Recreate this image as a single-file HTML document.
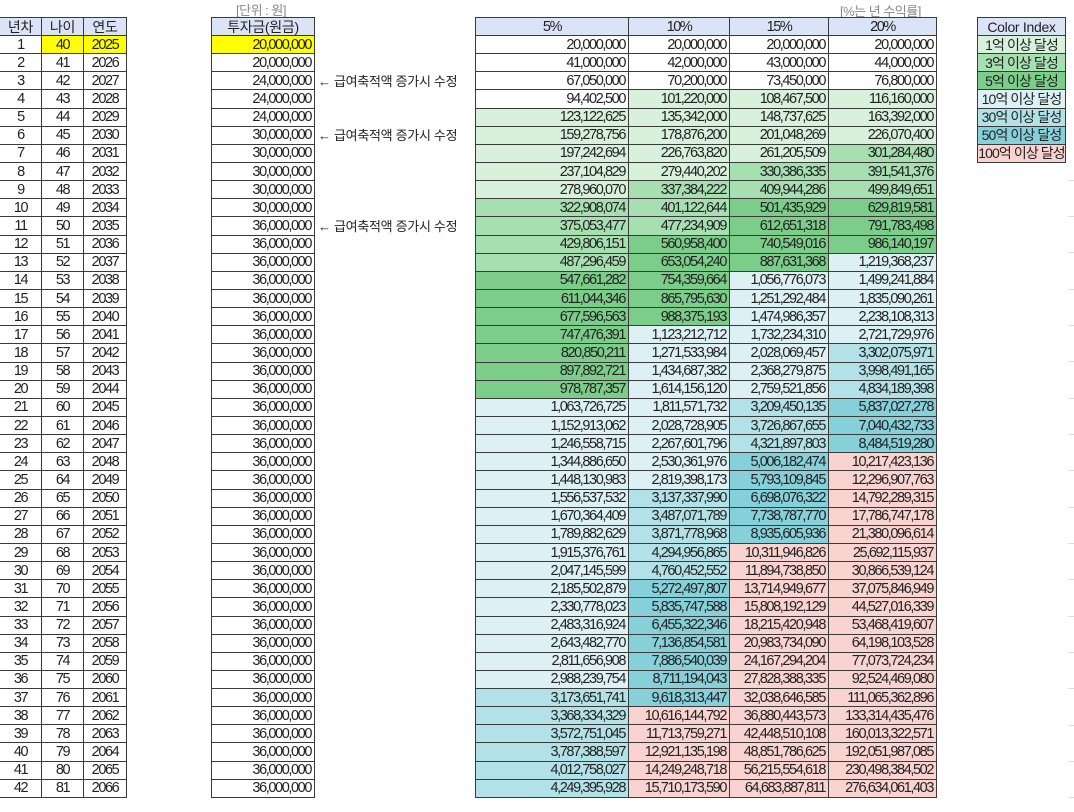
<!DOCTYPE html>
<html><head><meta charset="utf-8"><style>
html,body{margin:0;padding:0;background:#fff;width:1074px;height:812px;overflow:hidden;position:relative}
body{font-family:"Liberation Sans","Noto Sans CJK KR",sans-serif;color:#222;font-size:14.5px}
table{position:absolute;border-collapse:collapse;table-layout:fixed}
td{border:1px solid #3a3a3a;height:17.15px;padding:0 3px;line-height:16px;white-space:nowrap;overflow:hidden;text-align:right;letter-spacing:-1.4px}
tr.h td{background:#d9e4f7;text-align:center;height:17px}
.c{text-align:center}
.y{background:#ffff00}
.g1{background:#d8f1db}.g2{background:#a6dfb0}.g3{background:#7ccd8a}
.c1{background:#ddf1f4}.c2{background:#b2e2e7}.c3{background:#86d0d9}.p{background:#f9d3cf}
.k{letter-spacing:-0.3px;font-size:14px}
.ci{letter-spacing:-0.9px;font-size:14px}
.lbl{position:absolute;color:#888;font-size:13px;letter-spacing:-0.5px}
.arr{position:absolute;left:318px;font-size:13px;color:#222;letter-spacing:-0.3px}
.grid{position:absolute;left:1068px;width:6px;height:1px;background:#ddd}
</style></head><body>
<div class="lbl" style="left:236px;top:0px">[단위 : 원]</div>
<div class="lbl" style="left:840px;top:1px">[%는 년 수익률]</div>
<div class="arr" style="top:71px">← 급여축적액 증가시 수정</div>
<div class="arr" style="top:125px">← 급여축적액 증가시 수정</div>
<div class="arr" style="top:216px">← 급여축적액 증가시 수정</div>

<table style="left:-1px;top:17px;width:127px">
<colgroup><col style="width:42px"><col style="width:42px"><col style="width:43px"></colgroup>
<tr class="h"><td class="k">년차</td><td class="k">나이</td><td class="k">연도</td></tr>
<tr><td class="c">1</td><td class="c y">40</td><td class="c y">2025</td></tr>
<tr><td class="c">2</td><td class="c">41</td><td class="c">2026</td></tr>
<tr><td class="c">3</td><td class="c">42</td><td class="c">2027</td></tr>
<tr><td class="c">4</td><td class="c">43</td><td class="c">2028</td></tr>
<tr><td class="c">5</td><td class="c">44</td><td class="c">2029</td></tr>
<tr><td class="c">6</td><td class="c">45</td><td class="c">2030</td></tr>
<tr><td class="c">7</td><td class="c">46</td><td class="c">2031</td></tr>
<tr><td class="c">8</td><td class="c">47</td><td class="c">2032</td></tr>
<tr><td class="c">9</td><td class="c">48</td><td class="c">2033</td></tr>
<tr><td class="c">10</td><td class="c">49</td><td class="c">2034</td></tr>
<tr><td class="c">11</td><td class="c">50</td><td class="c">2035</td></tr>
<tr><td class="c">12</td><td class="c">51</td><td class="c">2036</td></tr>
<tr><td class="c">13</td><td class="c">52</td><td class="c">2037</td></tr>
<tr><td class="c">14</td><td class="c">53</td><td class="c">2038</td></tr>
<tr><td class="c">15</td><td class="c">54</td><td class="c">2039</td></tr>
<tr><td class="c">16</td><td class="c">55</td><td class="c">2040</td></tr>
<tr><td class="c">17</td><td class="c">56</td><td class="c">2041</td></tr>
<tr><td class="c">18</td><td class="c">57</td><td class="c">2042</td></tr>
<tr><td class="c">19</td><td class="c">58</td><td class="c">2043</td></tr>
<tr><td class="c">20</td><td class="c">59</td><td class="c">2044</td></tr>
<tr><td class="c">21</td><td class="c">60</td><td class="c">2045</td></tr>
<tr><td class="c">22</td><td class="c">61</td><td class="c">2046</td></tr>
<tr><td class="c">23</td><td class="c">62</td><td class="c">2047</td></tr>
<tr><td class="c">24</td><td class="c">63</td><td class="c">2048</td></tr>
<tr><td class="c">25</td><td class="c">64</td><td class="c">2049</td></tr>
<tr><td class="c">26</td><td class="c">65</td><td class="c">2050</td></tr>
<tr><td class="c">27</td><td class="c">66</td><td class="c">2051</td></tr>
<tr><td class="c">28</td><td class="c">67</td><td class="c">2052</td></tr>
<tr><td class="c">29</td><td class="c">68</td><td class="c">2053</td></tr>
<tr><td class="c">30</td><td class="c">69</td><td class="c">2054</td></tr>
<tr><td class="c">31</td><td class="c">70</td><td class="c">2055</td></tr>
<tr><td class="c">32</td><td class="c">71</td><td class="c">2056</td></tr>
<tr><td class="c">33</td><td class="c">72</td><td class="c">2057</td></tr>
<tr><td class="c">34</td><td class="c">73</td><td class="c">2058</td></tr>
<tr><td class="c">35</td><td class="c">74</td><td class="c">2059</td></tr>
<tr><td class="c">36</td><td class="c">75</td><td class="c">2060</td></tr>
<tr><td class="c">37</td><td class="c">76</td><td class="c">2061</td></tr>
<tr><td class="c">38</td><td class="c">77</td><td class="c">2062</td></tr>
<tr><td class="c">39</td><td class="c">78</td><td class="c">2063</td></tr>
<tr><td class="c">40</td><td class="c">79</td><td class="c">2064</td></tr>
<tr><td class="c">41</td><td class="c">80</td><td class="c">2065</td></tr>
<tr><td class="c">42</td><td class="c">81</td><td class="c">2066</td></tr>
</table>

<table style="left:211px;top:17px;width:103px">
<colgroup><col style="width:103px"></colgroup>
<tr class="h"><td class="k">투자금(원금)</td></tr>
<tr><td class="y">20,000,000</td></tr>
<tr><td>20,000,000</td></tr>
<tr><td>24,000,000</td></tr>
<tr><td>24,000,000</td></tr>
<tr><td>24,000,000</td></tr>
<tr><td>30,000,000</td></tr>
<tr><td>30,000,000</td></tr>
<tr><td>30,000,000</td></tr>
<tr><td>30,000,000</td></tr>
<tr><td>30,000,000</td></tr>
<tr><td>36,000,000</td></tr>
<tr><td>36,000,000</td></tr>
<tr><td>36,000,000</td></tr>
<tr><td>36,000,000</td></tr>
<tr><td>36,000,000</td></tr>
<tr><td>36,000,000</td></tr>
<tr><td>36,000,000</td></tr>
<tr><td>36,000,000</td></tr>
<tr><td>36,000,000</td></tr>
<tr><td>36,000,000</td></tr>
<tr><td>36,000,000</td></tr>
<tr><td>36,000,000</td></tr>
<tr><td>36,000,000</td></tr>
<tr><td>36,000,000</td></tr>
<tr><td>36,000,000</td></tr>
<tr><td>36,000,000</td></tr>
<tr><td>36,000,000</td></tr>
<tr><td>36,000,000</td></tr>
<tr><td>36,000,000</td></tr>
<tr><td>36,000,000</td></tr>
<tr><td>36,000,000</td></tr>
<tr><td>36,000,000</td></tr>
<tr><td>36,000,000</td></tr>
<tr><td>36,000,000</td></tr>
<tr><td>36,000,000</td></tr>
<tr><td>36,000,000</td></tr>
<tr><td>36,000,000</td></tr>
<tr><td>36,000,000</td></tr>
<tr><td>36,000,000</td></tr>
<tr><td>36,000,000</td></tr>
<tr><td>36,000,000</td></tr>
<tr><td>36,000,000</td></tr>
</table>

<table style="left:475px;top:17px;width:461px">
<colgroup><col style="width:153px"><col style="width:101px"><col style="width:99px"><col style="width:108px"></colgroup>
<tr class="h"><td>5%</td><td>10%</td><td>15%</td><td>20%</td></tr>
<tr><td>20,000,000</td><td>20,000,000</td><td>20,000,000</td><td>20,000,000</td></tr>
<tr><td>41,000,000</td><td>42,000,000</td><td>43,000,000</td><td>44,000,000</td></tr>
<tr><td>67,050,000</td><td>70,200,000</td><td>73,450,000</td><td>76,800,000</td></tr>
<tr><td>94,402,500</td><td class="g1">101,220,000</td><td class="g1">108,467,500</td><td class="g1">116,160,000</td></tr>
<tr><td class="g1">123,122,625</td><td class="g1">135,342,000</td><td class="g1">148,737,625</td><td class="g1">163,392,000</td></tr>
<tr><td class="g1">159,278,756</td><td class="g1">178,876,200</td><td class="g1">201,048,269</td><td class="g1">226,070,400</td></tr>
<tr><td class="g1">197,242,694</td><td class="g1">226,763,820</td><td class="g1">261,205,509</td><td class="g2">301,284,480</td></tr>
<tr><td class="g1">237,104,829</td><td class="g1">279,440,202</td><td class="g2">330,386,335</td><td class="g2">391,541,376</td></tr>
<tr><td class="g1">278,960,070</td><td class="g2">337,384,222</td><td class="g2">409,944,286</td><td class="g2">499,849,651</td></tr>
<tr><td class="g2">322,908,074</td><td class="g2">401,122,644</td><td class="g3">501,435,929</td><td class="g3">629,819,581</td></tr>
<tr><td class="g2">375,053,477</td><td class="g2">477,234,909</td><td class="g3">612,651,318</td><td class="g3">791,783,498</td></tr>
<tr><td class="g2">429,806,151</td><td class="g3">560,958,400</td><td class="g3">740,549,016</td><td class="g3">986,140,197</td></tr>
<tr><td class="g2">487,296,459</td><td class="g3">653,054,240</td><td class="g3">887,631,368</td><td class="c1">1,219,368,237</td></tr>
<tr><td class="g3">547,661,282</td><td class="g3">754,359,664</td><td class="c1">1,056,776,073</td><td class="c1">1,499,241,884</td></tr>
<tr><td class="g3">611,044,346</td><td class="g3">865,795,630</td><td class="c1">1,251,292,484</td><td class="c1">1,835,090,261</td></tr>
<tr><td class="g3">677,596,563</td><td class="g3">988,375,193</td><td class="c1">1,474,986,357</td><td class="c1">2,238,108,313</td></tr>
<tr><td class="g3">747,476,391</td><td class="c1">1,123,212,712</td><td class="c1">1,732,234,310</td><td class="c1">2,721,729,976</td></tr>
<tr><td class="g3">820,850,211</td><td class="c1">1,271,533,984</td><td class="c1">2,028,069,457</td><td class="c2">3,302,075,971</td></tr>
<tr><td class="g3">897,892,721</td><td class="c1">1,434,687,382</td><td class="c1">2,368,279,875</td><td class="c2">3,998,491,165</td></tr>
<tr><td class="g3">978,787,357</td><td class="c1">1,614,156,120</td><td class="c1">2,759,521,856</td><td class="c2">4,834,189,398</td></tr>
<tr><td class="c1">1,063,726,725</td><td class="c1">1,811,571,732</td><td class="c2">3,209,450,135</td><td class="c3">5,837,027,278</td></tr>
<tr><td class="c1">1,152,913,062</td><td class="c1">2,028,728,905</td><td class="c2">3,726,867,655</td><td class="c3">7,040,432,733</td></tr>
<tr><td class="c1">1,246,558,715</td><td class="c1">2,267,601,796</td><td class="c2">4,321,897,803</td><td class="c3">8,484,519,280</td></tr>
<tr><td class="c1">1,344,886,650</td><td class="c1">2,530,361,976</td><td class="c3">5,006,182,474</td><td class="p">10,217,423,136</td></tr>
<tr><td class="c1">1,448,130,983</td><td class="c1">2,819,398,173</td><td class="c3">5,793,109,845</td><td class="p">12,296,907,763</td></tr>
<tr><td class="c1">1,556,537,532</td><td class="c2">3,137,337,990</td><td class="c3">6,698,076,322</td><td class="p">14,792,289,315</td></tr>
<tr><td class="c1">1,670,364,409</td><td class="c2">3,487,071,789</td><td class="c3">7,738,787,770</td><td class="p">17,786,747,178</td></tr>
<tr><td class="c1">1,789,882,629</td><td class="c2">3,871,778,968</td><td class="c3">8,935,605,936</td><td class="p">21,380,096,614</td></tr>
<tr><td class="c1">1,915,376,761</td><td class="c2">4,294,956,865</td><td class="p">10,311,946,826</td><td class="p">25,692,115,937</td></tr>
<tr><td class="c1">2,047,145,599</td><td class="c2">4,760,452,552</td><td class="p">11,894,738,850</td><td class="p">30,866,539,124</td></tr>
<tr><td class="c1">2,185,502,879</td><td class="c3">5,272,497,807</td><td class="p">13,714,949,677</td><td class="p">37,075,846,949</td></tr>
<tr><td class="c1">2,330,778,023</td><td class="c3">5,835,747,588</td><td class="p">15,808,192,129</td><td class="p">44,527,016,339</td></tr>
<tr><td class="c1">2,483,316,924</td><td class="c3">6,455,322,346</td><td class="p">18,215,420,948</td><td class="p">53,468,419,607</td></tr>
<tr><td class="c1">2,643,482,770</td><td class="c3">7,136,854,581</td><td class="p">20,983,734,090</td><td class="p">64,198,103,528</td></tr>
<tr><td class="c1">2,811,656,908</td><td class="c3">7,886,540,039</td><td class="p">24,167,294,204</td><td class="p">77,073,724,234</td></tr>
<tr><td class="c1">2,988,239,754</td><td class="c3">8,711,194,043</td><td class="p">27,828,388,335</td><td class="p">92,524,469,080</td></tr>
<tr><td class="c2">3,173,651,741</td><td class="c3">9,618,313,447</td><td class="p">32,038,646,585</td><td class="p">111,065,362,896</td></tr>
<tr><td class="c2">3,368,334,329</td><td class="p">10,616,144,792</td><td class="p">36,880,443,573</td><td class="p">133,314,435,476</td></tr>
<tr><td class="c2">3,572,751,045</td><td class="p">11,713,759,271</td><td class="p">42,448,510,108</td><td class="p">160,013,322,571</td></tr>
<tr><td class="c2">3,787,388,597</td><td class="p">12,921,135,198</td><td class="p">48,851,786,625</td><td class="p">192,051,987,085</td></tr>
<tr><td class="c2">4,012,758,027</td><td class="p">14,249,248,718</td><td class="p">56,215,554,618</td><td class="p">230,498,384,502</td></tr>
<tr><td class="c2">4,249,395,928</td><td class="p">15,710,173,590</td><td class="p">64,683,887,811</td><td class="p">276,634,061,403</td></tr>
</table>

<table style="left:977px;top:17px;width:88px">
<colgroup><col style="width:88px"></colgroup>
<tr class="h"><td class="k">Color Index</td></tr>
<tr><td class="g1 c ci">1억 이상 달성</td></tr>
<tr><td class="g2 c ci">3억 이상 달성</td></tr>
<tr><td class="g3 c ci">5억 이상 달성</td></tr>
<tr><td class="c1 c ci">10억 이상 달성</td></tr>
<tr><td class="c2 c ci">30억 이상 달성</td></tr>
<tr><td class="c3 c ci">50억 이상 달성</td></tr>
<tr><td class="p c ci" style="padding:0">100억 이상 달성</td></tr>
</table>

<div class="grid" style="top:180px"></div><div class="grid" style="top:216px"></div><div class="grid" style="top:252px"></div>
<div class="grid" style="top:289px"></div><div class="grid" style="top:325px"></div><div class="grid" style="top:361px"></div>
<div class="grid" style="top:398px"></div><div class="grid" style="top:434px"></div><div class="grid" style="top:470px"></div>
<div class="grid" style="top:507px"></div><div class="grid" style="top:543px"></div><div class="grid" style="top:579px"></div>
<div class="grid" style="top:616px"></div><div class="grid" style="top:652px"></div><div class="grid" style="top:688px"></div>
<div class="grid" style="top:725px"></div><div class="grid" style="top:761px"></div><div class="grid" style="top:797px"></div>
</body></html>
